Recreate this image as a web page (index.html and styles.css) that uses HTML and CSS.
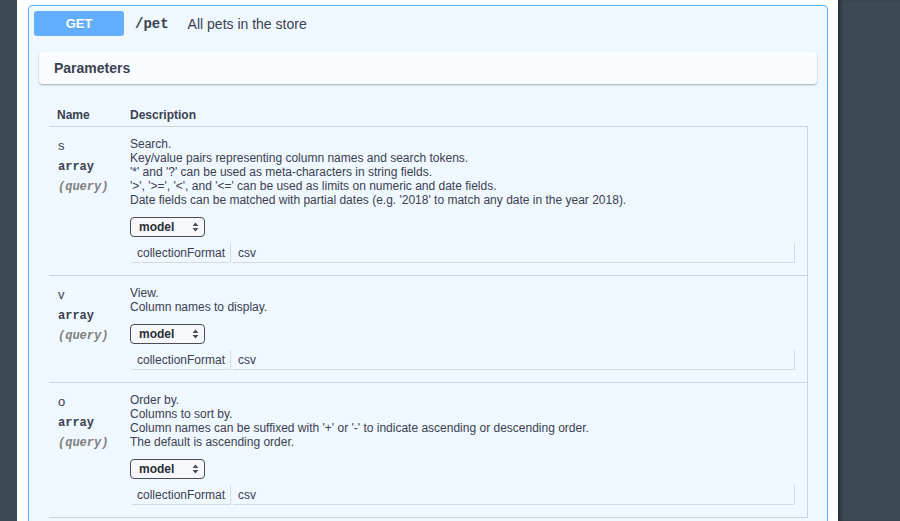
FILE: index.html
```html
<!DOCTYPE html>
<html lang="en">
<head>
<meta charset="utf-8">
<title>/pet</title>
<link rel="stylesheet" href="styles.css">
</head>
<body>
<div class="page">
  <aside class="side-left"></aside>
  <main class="main">
    <section class="opblock">
      <div class="summary">
        <span class="method">GET</span>
        <span class="path">/pet</span>
        <span class="summary-desc">All pets in the store</span>
      </div>
      <div class="section-header"><h4>Parameters</h4></div>
      <div class="params">
        <div class="params-head">
          <div class="col-name">Name</div>
          <div class="col-desc">Description</div>
        </div>
        <div class="params-rows">
          <div class="param-row">
            <div class="col-name">
              <div class="pname">s</div>
              <div class="ptype">array</div>
              <div class="pin">(query)</div>
            </div>
            <div class="col-desc">
              <p class="markdown">Search.<br>Key/value pairs representing column names and search tokens.<br>'*' and '?' can be used as meta-characters in string fields.<br>'&gt;', '&gt;=', '&lt;', and '&lt;=' can be used as limits on numeric and date fields.<br>Date fields can be matched with partial dates (e.g. '2018' to match any date in the year 2018).</p>
              <div class="select"><span>model</span><svg class="arrows" width="7" height="10" viewBox="0 0 7 10"><path d="M3.5 0.5 L6.5 4 L0.5 4 Z M0.5 6 L6.5 6 L3.5 9.5 Z"/></svg></div>
              <table class="model-table"><tr><td class="mk">collectionFormat</td><td>csv</td></tr></table>
            </div>
          </div>
          <div class="param-row">
            <div class="col-name">
              <div class="pname">v</div>
              <div class="ptype">array</div>
              <div class="pin">(query)</div>
            </div>
            <div class="col-desc">
              <p class="markdown">View.<br>Column names to display.</p>
              <div class="select"><span>model</span><svg class="arrows" width="7" height="10" viewBox="0 0 7 10"><path d="M3.5 0.5 L6.5 4 L0.5 4 Z M0.5 6 L6.5 6 L3.5 9.5 Z"/></svg></div>
              <table class="model-table"><tr><td class="mk">collectionFormat</td><td>csv</td></tr></table>
            </div>
          </div>
          <div class="param-row">
            <div class="col-name">
              <div class="pname">o</div>
              <div class="ptype">array</div>
              <div class="pin">(query)</div>
            </div>
            <div class="col-desc">
              <p class="markdown">Order by.<br>Columns to sort by.<br>Column names can be suffixed with '+' or '-' to indicate ascending or descending order.<br>The default is ascending order.</p>
              <div class="select"><span>model</span><svg class="arrows" width="7" height="10" viewBox="0 0 7 10"><path d="M3.5 0.5 L6.5 4 L0.5 4 Z M0.5 6 L6.5 6 L3.5 9.5 Z"/></svg></div>
              <table class="model-table"><tr><td class="mk">collectionFormat</td><td>csv</td></tr></table>
            </div>
          </div>
        </div>
      </div>
    </section>
  </main>
  <aside class="side-right"></aside>
</div>
</body>
</html>
```

FILE: styles.css
```css
html, body {
  margin: 0;
  padding: 0;
  height: 521px;
  overflow: hidden;
  background: #ffffff;
}
body {
  font-family: "Liberation Sans", Arial, Helvetica, sans-serif;
  color: #3b4151;
}
.page {
  display: flex;
  height: 521px;
}
.side-left {
  width: 17px;
  flex: none;
  background: #3c4a53;
}
.side-right {
  flex: 1;
  background: #3c4a53;
  box-shadow: inset 4px 0 4px -2px rgba(0, 0, 0, 0.45);
}
.main {
  width: 821px;
  flex: none;
  box-sizing: border-box;
  padding: 5px 10px 0 11px;
  background: #ffffff;
}
.opblock {
  border: 1px solid #61affe;
  border-radius: 4px;
  background: #eff7ff;
  padding-bottom: 60px;
}
.summary {
  display: flex;
  align-items: center;
  padding: 5px;
}
.method {
  width: 90px;
  height: 25px;
  box-sizing: border-box;
  background: #61affe;
  border-radius: 3px;
  color: #ffffff;
  font-weight: 700;
  font-size: 13px;
  display: flex;
  align-items: center;
  justify-content: center;
  text-shadow: 0 1px 0 rgba(0, 0, 0, 0.1);
}
.path {
  font-family: "Liberation Mono", "Courier New", monospace;
  font-weight: 700;
  font-size: 14px;
  margin-left: 11px;
  color: #3b4151;
}
.summary-desc {
  font-size: 14px;
  margin-left: 19px;
  color: #3b4151;
}
.section-header {
  margin: 11px 10px 0 10px;
  padding: 9px 15px;
  background: rgba(255, 255, 255, 0.6);
  border-radius: 4px;
  box-shadow: 0 1px 2px rgba(0, 0, 0, 0.3);
}
.section-header h4 {
  margin: 0;
  font-size: 14px;
  line-height: 14px;
  font-weight: 700;
}
.params {
  margin-top: 20px;
  padding: 0 19px 0 20px;
}
.params-head {
  display: flex;
  padding: 4px 0;
  font-size: 12px;
  line-height: 14px;
  font-weight: 700;
  border-bottom: 1px solid #cbd2dc;
}
.col-name {
  width: 81px;
  flex: none;
  box-sizing: border-box;
  padding-left: 8px;
}
.col-desc {
  flex: 1;
  min-width: 0;
  padding-right: 10px;
}
.params-rows {
  border-right: 1px solid #cbd2dc;
}
.param-row {
  display: flex;
  padding: 10px 0;
  border-bottom: 1px solid #cbd2dc;
}
.param-row .col-name {
  padding-left: 9px;
  padding-top: 1px;
}
.pname {
  font-size: 13px;
  line-height: 16px;
}
.ptype {
  font-family: "Liberation Mono", "Courier New", monospace;
  font-weight: 700;
  font-size: 12px;
  line-height: 14px;
  padding: 6px 0;
}
.pin {
  font-family: "Liberation Mono", "Courier New", monospace;
  font-weight: 700;
  font-style: italic;
  font-size: 12px;
  line-height: 14px;
  color: #808080;
}
.markdown {
  margin: 0;
  font-size: 12px;
  line-height: 14px;
}
.select {
  margin-top: 10px;
  width: 75px;
  height: 20px;
  box-sizing: border-box;
  border: 1px solid #4b4e57;
  border-radius: 4px;
  background: #f6f8fb;
  display: flex;
  align-items: center;
  justify-content: space-between;
  padding: 0 5px 0 8px;
  font-size: 12px;
  font-weight: 700;
  color: #2b2e36;
}
.arrows {
  fill: #4a4d55;
}
.model-table {
  margin-top: 4px;
  width: 100%;
  border-collapse: separate;
  border-spacing: 2px;
  font-size: 12px;
  line-height: 14px;
}
.model-table td {
  padding: 3px 5px 2px 5px;
  border-right: 1px solid #d6dbe2;
  border-bottom: 1px solid #d6dbe2;
}
.model-table td.mk {
  width: 88px;
}
```
